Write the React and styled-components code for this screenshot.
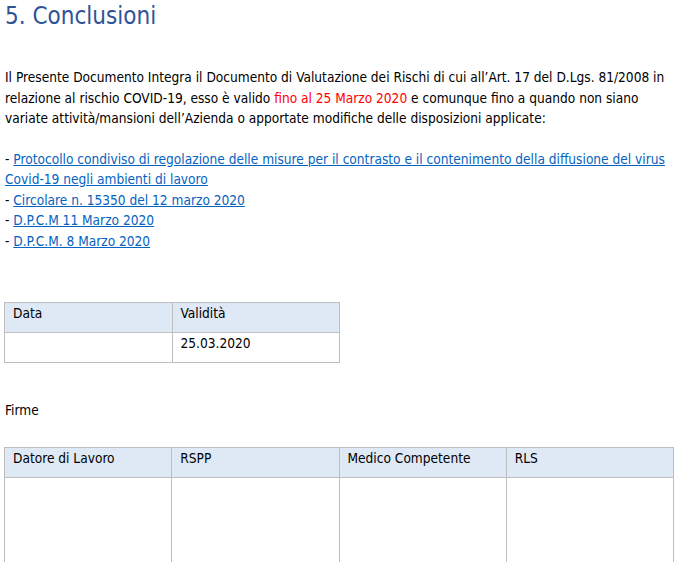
import React from 'react';
import styled, { createGlobalStyle } from 'styled-components';

const Global = createGlobalStyle`
  body { margin: 0; background: #fff; font-family: Tahoma, "DejaVu Sans Condensed", "Liberation Sans", sans-serif; font-size: 13.6px; color: #000; }
`;

const Page = styled.div`
  padding: 0 5px;
`;

const Heading = styled.h1`
  margin: 0;
  padding-top: 1px;
  font-size: 24px;
  font-weight: normal;
  line-height: 30px;
  color: #2f5496;
`;

const Para = styled.p`
  margin: 0;
  line-height: 20.5px;
  margin-top: ${p => p.$top || 0}px;
`;

const Red = styled.span`color: #ff0000;`;

const Link = styled.a`
  color: #0563c1;
  text-decoration: underline;
`;

const Table = styled.table`
  border-collapse: collapse;
  width: ${p => p.$width}px;
  margin-left: -1px;
  margin-top: ${p => p.$top}px;
  table-layout: fixed;
  & td { border: 1px solid #bfbfbf; padding: 1px 8px; vertical-align: top; line-height: 18px; }
`;

const HeadRow = styled.tr`
  background: #dee9f5;
  & td { height: 27px; }
`;

const Row = styled.tr`
  & td { height: ${p => p.$h}px; }
`;

export default function App() {
  return (
    <Page>
      <Global />
      <Heading>5. Conclusioni</Heading>
      <Para $top={36}>
        Il Presente Documento Integra il Documento di Valutazione dei Rischi di cui all’Art. 17 del D.Lgs. 81/2008 in relazione al rischio COVID-19, esso è valido <Red>fino al 25 Marzo 2020</Red> e comunque fino a quando non siano variate attività/mansioni dell’Azienda o apportate modifiche delle disposizioni applicate:
      </Para>
      <Para $top={20}>- <Link>Protocollo condiviso di regolazione delle misure per il contrasto e il contenimento della diffusione del virus Covid-19 negli ambienti di lavoro</Link></Para>
      <Para>- <Link>Circolare n. 15350 del 12 marzo 2020</Link></Para>
      <Para>- <Link>D.P.C.M 11 Marzo 2020</Link></Para>
      <Para>- <Link>D.P.C.M. 8 Marzo 2020</Link></Para>
      <Table $width={336} $top={51}>
        <tbody>
          <HeadRow><td>Data</td><td>Validità</td></HeadRow>
          <Row $h={27}><td></td><td>25.03.2020</td></Row>
        </tbody>
      </Table>
      <Para $top={37}>Firme</Para>
      <Table $width={670} $top={26}>
        <tbody>
          <HeadRow><td>Datore di Lavoro</td><td>RSPP</td><td>Medico Competente</td><td>RLS</td></HeadRow>
          <Row $h={82}><td></td><td></td><td></td><td></td></Row>
        </tbody>
      </Table>
    </Page>
  );
}
